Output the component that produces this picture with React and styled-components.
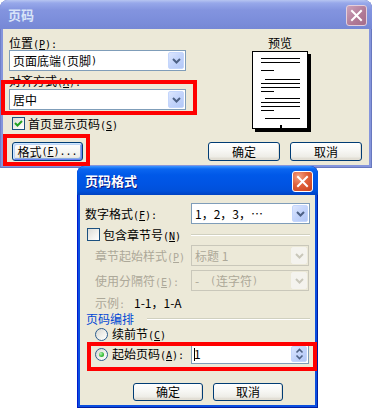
import React from "react";
import styled, { createGlobalStyle } from "styled-components";

const GlobalStyle = createGlobalStyle`
  html, body { margin: 0; padding: 0; background: #ffffff; }
  #root { width: 372px; height: 408px; }
`;

const FONT = `"Noto Sans CJK SC", "Noto Sans", sans-serif`;

const Desktop = styled.div`
  position: relative;
  width: 372px;
  height: 408px;
  overflow: hidden;
  background: #ffffff;
  font-family: ${FONT};
  font-size: 12px;
  line-height: 14px;
  color: #000;
`;

const Window = styled.div`
  position: absolute;
  left: ${(p) => p.$x}px;
  top: ${(p) => p.$y}px;
  width: ${(p) => p.$w}px;
  height: ${(p) => p.$h}px;
  box-sizing: border-box;
  display: flex;
  flex-direction: column;
  border-radius: 8px 8px 0 0;
  background: ${(p) => (p.$active ? "#0B4EDF" : "#8595DC")};
  box-shadow: ${(p) =>
    p.$active
      ? "inset 1px 0 #0019CF, inset -1px 0 #001DA0, inset 0 -1px #001DA0"
      : "inset 1px 0 #6F7FC9, inset -1px 0 #6878BE, inset 0 -1px #6878BE"};
`;

const TitleBar = styled.div`
  flex: none;
  height: 29px;
  box-sizing: border-box;
  display: flex;
  align-items: center;
  justify-content: space-between;
  padding: 1px 5px 0 8px;
  border-radius: 8px 8px 0 0;
  background: ${(p) =>
    p.$active
      ? "linear-gradient(180deg, #3D95FF 0px, #0A66F0 3px, #0058E8 9px, #0054E3 18px, #0050DA 25px, #0042C2 29px)"
      : "linear-gradient(180deg, #B7C5F1 0px, #97A8EA 3px, #8394DF 10px, #7C8EDB 20px, #7688D5 29px)"};
`;

const TitleText = styled.span`
  font-size: 13px;
  font-weight: bold;
  line-height: 16px;
  color: ${(p) => (p.$active ? "#ffffff" : "#D8E4F8")};
  text-shadow: ${(p) => (p.$active ? "1px 1px 0 #0A1883" : "none")};
`;

const CloseBtn = styled.span`
  flex: none;
  width: 21px;
  height: 21px;
  box-sizing: border-box;
  border-radius: 3px;
  border: 1px solid ${(p) => (p.$active ? "#ffffff" : "#E4CFDB")};
  background: ${(p) =>
    p.$active
      ? "radial-gradient(circle at 30% 25%, #F3A184 0%, #E0603A 45%, #C7401C 100%)"
      : "linear-gradient(135deg, #CCA2BA 0%, #B07996 60%, #A56D8B 100%)"};
  display: flex;
  align-items: center;
  justify-content: center;
`;

const OuterBody = styled.div`
  flex: 1;
  margin: 0 3px 3px;
  background: #ECE9D8;
  display: flex;
  padding: 7px 7px 4px 6px;
  box-sizing: border-box;
`;

const InnerBody = styled.div`
  flex: 1;
  margin: 0 3px 3px;
  background: #ECE9D8;
  display: flex;
  flex-direction: column;
  padding: 8px 5px 4px 5px;
  box-sizing: border-box;
`;

const LeftCol = styled.div`
  width: 177px;
  display: flex;
  flex-direction: column;
`;

const RightCol = styled.div`
  flex: 1;
  display: flex;
  flex-direction: column;
`;

const FieldLabel = styled.div`
  height: 14px;
  margin-top: ${(p) => p.$mt || 0}px;
  padding-left: ${(p) => p.$indent || 0}px;
  white-space: nowrap;
  color: ${(p) => (p.$disabled ? "#ACA899" : "#000")};
`;

const Lat = styled.span`
  font-family: "DejaVu Sans Mono", "Liberation Mono", monospace;
  font-size: 10px;
  line-height: 10px;
`;

const U = styled.u`
  text-underline-offset: 1px;
`;

const Mn = ({ k, colon, tail }) => (
  <Lat>
    (<U>{k}</U>){colon ? ":" : ""}
    {tail || ""}
  </Lat>
);

const SelectBox = styled.div`
  flex: none;
  width: ${(p) => p.$w}px;
  height: ${(p) => p.$h || 21}px;
  margin-top: ${(p) => p.$mt || 0}px;
  box-sizing: border-box;
  display: flex;
  align-items: stretch;
  border: 1px solid ${(p) => (p.$disabled ? "#C9C7BA" : "#7F9DB9")};
  background: ${(p) => (p.$disabled ? "#ECE9D8" : "#ffffff")};
  color: ${(p) => (p.$disabled ? "#ACA899" : "#000")};
`;

const SelectValue = styled.span`
  flex: 1;
  display: flex;
  align-items: center;
  padding-left: 3px;
  white-space: nowrap;
  overflow: hidden;
`;

const ArrowBtn = styled.span`
  flex: none;
  width: 16px;
  margin: 1px;
  box-sizing: border-box;
  border-radius: 2px;
  border: 1px solid ${(p) => (p.$disabled ? "#F4F3EE" : "#C4D6FC")};
  background: ${(p) =>
    p.$disabled
      ? "#F4F3EE"
      : "linear-gradient(135deg, #DCE6FE 0%, #C3D4FB 50%, #B3C8F7 100%)"};
  display: flex;
  align-items: center;
  justify-content: center;
`;

const Chevron = ({ color = "#4D6185" }) => (
  <svg width="9" height="6" viewBox="0 0 9 6">
    <path d="M1 1 L4.5 4.5 L8 1" fill="none" stroke={color} strokeWidth="2" />
  </svg>
);

const Select = ({ w, h, mt, disabled, children }) => (
  <SelectBox $w={w} $h={h} $mt={mt} $disabled={disabled}>
    <SelectValue>{children}</SelectValue>
    <ArrowBtn $disabled={disabled}>
      <Chevron color={disabled ? "#C9C7BA" : "#4D6185"} />
    </ArrowBtn>
  </SelectBox>
);

const CheckRow = styled.div`
  display: flex;
  align-items: center;
  gap: 3px;
  height: 13px;
  margin-top: ${(p) => p.$mt || 0}px;
  padding-left: ${(p) => p.$indent || 0}px;
  white-space: nowrap;
`;

const CheckBoxBox = styled.span`
  flex: none;
  width: 13px;
  height: 13px;
  box-sizing: border-box;
  border: 1px solid #1C5180;
  background: linear-gradient(135deg, #DCDCD7 0%, #F3F3EF 60%, #FFFFFF 100%);
  display: flex;
  align-items: center;
  justify-content: center;
`;

const CheckBox = ({ checked }) => (
  <CheckBoxBox>
    {checked && (
      <svg width="11" height="11" viewBox="0 0 11 11">
        <path d="M2 5 L4.5 7.5 L9 3" fill="none" stroke="#21A121" strokeWidth="2" />
      </svg>
    )}
  </CheckBoxBox>
);

const RadioDot = styled.span`
  flex: none;
  width: 13px;
  height: 13px;
  box-sizing: border-box;
  border-radius: 50%;
  border: 1px solid #2A5C8E;
  background: linear-gradient(135deg, #D8D8D2 0%, #F2F2EE 60%, #FFFFFF 100%);
  display: flex;
  align-items: center;
  justify-content: center;
  &::after {
    content: "";
    display: ${(p) => (p.$checked ? "block" : "none")};
    width: 5px;
    height: 5px;
    border-radius: 50%;
    background: radial-gradient(circle at 35% 35%, #B6F5B6 0%, #3CC03C 55%, #1E961E 100%);
  }
`;

const RadioRow = styled.div`
  display: flex;
  align-items: center;
  gap: 4px;
  height: ${(p) => p.$h || 14}px;
  margin-top: ${(p) => p.$mt || 0}px;
  padding-left: ${(p) => p.$indent || 0}px;
  white-space: nowrap;
`;

const PushButton = styled.div`
  flex: none;
  width: ${(p) => p.$w}px;
  height: ${(p) => p.$h}px;
  margin-top: ${(p) => (p.$auto ? "auto" : "0")};
  margin-left: ${(p) => p.$ml || 0}px;
  box-sizing: border-box;
  border: 1px solid #003C74;
  border-radius: 3px;
  background: linear-gradient(180deg, #FFFFFF 0%, #F7F7F4 45%, #EEEDE7 80%, #D8D2C6 100%);
  box-shadow: ${(p) =>
    p.$focus
      ? "inset 1px 1px 0 #CEE7FF, inset -1px -1px 0 #6982EE, inset 2px 2px 0 #BCD4F6, inset -2px -2px 0 #89ADE4"
      : "inset -1px -1px 0 #E3DFD4"};
  display: flex;
  align-items: center;
  justify-content: center;
  white-space: nowrap;
`;

const ButtonRow = styled.div`
  display: flex;
  gap: 10px;
  justify-content: ${(p) => (p.$start ? "flex-start" : "flex-end")};
  padding-left: ${(p) => p.$pl || 0}px;
  margin-top: auto;
`;

const Preview = styled.div`
  display: flex;
  flex-direction: column;
  align-items: flex-start;
  padding-left: 66px;
`;

const PreviewLabel = styled.div`
  width: 56px;
  height: 14px;
  text-align: center;
`;

const PageSvg = styled.svg`
  display: block;
  margin-top: 1px;
`;

const previewLines = [
  [7, 9, 48], [11, 9, 48], [19, 9, 22],
  [28, 13, 48], [32, 9, 48], [36, 9, 48], [40, 9, 22],
  [47, 13, 48], [51, 9, 48], [55, 9, 48], [59, 9, 22],
  [67, 13, 48],
];

const PagePreview = () => (
  <PageSvg width="60" height="81" viewBox="0 0 60 81">
    <rect x="3" y="3" width="56" height="78" fill="#000" />
    <rect x="0.5" y="0.5" width="55" height="77" fill="#fff" stroke="#000" />
    {previewLines.map(([y, x1, x2], i) => (
      <rect key={i} x={x1} y={y} width={x2 - x1} height="1" fill="#000" />
    ))}
    <rect x="28" y="74" width="2" height="3" fill="#000" />
  </PageSvg>
);

const FormRow = styled.div`
  display: grid;
  grid-template-columns: 106px 119px;
  align-items: center;
  height: ${(p) => p.$h}px;
  margin-top: ${(p) => p.$mt || 0}px;
`;

const Etch = styled.div`
  height: 0;
  border-top: 1px solid #D0D0BF;
  border-bottom: 1px solid #FFFFFF;
  flex: 1;
  margin-left: ${(p) => p.$ml || 0}px;
`;

const ExampleRow = styled.div`
  display: flex;
  align-items: center;
  height: 14px;
  margin-top: 5px;
  padding-left: 10px;
`;

const ExampleLabel = styled.span`
  width: 39px;
  color: #ACA899;
`;

const GroupHeader = styled.div`
  display: flex;
  align-items: center;
  height: 14px;
  margin-top: 2px;
  padding-left: 1px;
`;

const GroupTitle = styled.span`
  color: #0046D5;
`;

const SpinBox = styled.div`
  width: ${(p) => p.$w}px;
  height: 20px;
  box-sizing: border-box;
  display: flex;
  border: 1px solid #7F9DB9;
  background: #ffffff;
`;

const SpinValue = styled.span`
  flex: 1;
  display: flex;
  align-items: center;
  padding-left: 2px;
`;

const Caret = styled.span`
  width: 1px;
  height: 13px;
  background: #000;
  margin-right: -1px;
`;

const SpinArrows = () => (
  <svg width="9" height="12" viewBox="0 0 9 12">
    <path d="M1.5 4.5 L4.5 1.5 L7.5 4.5" fill="none" stroke="#4D6185" strokeWidth="1.6" />
    <path d="M1.5 7.5 L4.5 10.5 L7.5 7.5" fill="none" stroke="#4D6185" strokeWidth="1.6" />
  </svg>
);

const CloseIcon = () => (
  <svg width="13" height="13" viewBox="0 0 13 13">
    <path d="M2 2 L11 11 M11 2 L2 11" stroke="#fff" strokeWidth="2" strokeLinecap="square" />
  </svg>
);

const Annotation = styled.div`
  position: absolute;
  left: ${(p) => p.$x}px;
  top: ${(p) => p.$y}px;
  width: ${(p) => p.$w}px;
  height: ${(p) => p.$h}px;
  box-sizing: border-box;
  border: 4px solid #FF0000;
  pointer-events: none;
`;

export default function App() {
  return (
    <>
      <GlobalStyle />
      <Desktop>
        <Window $x={0} $y={0} $w={372} $h={168}>
          <TitleBar>
            <TitleText>页码</TitleText>
            <CloseBtn>
              <CloseIcon />
            </CloseBtn>
          </TitleBar>
          <OuterBody>
            <LeftCol>
              <FieldLabel>
                位置<Mn k="P" colon />
              </FieldLabel>
              <Select w={177}>
                页面底端<Lat>(</Lat>页脚<Lat>)</Lat>
              </Select>
              <FieldLabel $mt={3}>
                对齐方式<Mn k="A" colon />
              </FieldLabel>
              <Select w={177} mt={1}>
                居中
              </Select>
              <CheckRow $mt={7} $indent={3}>
                <CheckBox checked />
                <span>
                  首页显示页码<Mn k="S" />
                </span>
              </CheckRow>
              <PushButton $w={71} $h={19} $auto $ml={3} $focus>
                格式<Mn k="F" tail="..." />
              </PushButton>
            </LeftCol>
            <RightCol>
              <Preview>
                <PreviewLabel>预览</PreviewLabel>
                <PagePreview />
              </Preview>
              <ButtonRow>
                <PushButton $w={72} $h={19}>确定</PushButton>
                <PushButton $w={72} $h={19}>取消</PushButton>
              </ButtonRow>
            </RightCol>
          </OuterBody>
        </Window>

        <Window $x={77} $y={166} $w={241} $h={242} $active>
          <TitleBar $active>
            <TitleText $active>页码格式</TitleText>
            <CloseBtn $active>
              <CloseIcon />
            </CloseBtn>
          </TitleBar>
          <InnerBody>
            <FormRow $h={21}>
              <FieldLabel>
                数字格式<Mn k="F" colon />
              </FieldLabel>
              <Select w={119}>1，2，3，…</Select>
            </FormRow>
            <FormRow $h={15} $mt={3}>
              <CheckRow $indent={2}>
                <CheckBox />
                <span>
                  包含章节号<Mn k="N" />
                </span>
              </CheckRow>
              <Etch />
            </FormRow>
            <FormRow $h={21} $mt={3}>
              <FieldLabel $indent={10} $disabled>
                章节起始样式<Mn k="P" />
              </FieldLabel>
              <Select w={118} disabled>
                标题 1
              </Select>
            </FormRow>
            <FormRow $h={21} $mt={4}>
              <FieldLabel $indent={10} $disabled>
                使用分隔符<Mn k="E" colon />
              </FieldLabel>
              <Select w={118} disabled>
                -&nbsp;&nbsp;&nbsp;&nbsp;<Lat>(</Lat>连字符<Lat>)</Lat>
              </Select>
            </FormRow>
            <ExampleRow>
              <ExampleLabel>
                示例<Lat>:</Lat>
              </ExampleLabel>
              <span>1-1，1-A</span>
            </ExampleRow>
            <GroupHeader>
              <GroupTitle>页码编排</GroupTitle>
              <Etch $ml={13} />
            </GroupHeader>
            <RadioRow $indent={10} $mt={1}>
              <RadioDot />
              <span>
                续前节<Mn k="C" />
              </span>
            </RadioRow>
            <FormRow $h={20} $mt={3}>
              <RadioRow $indent={10} $h={20}>
                <RadioDot $checked />
                <span>
                  起始页码<Mn k="A" colon />
                </span>
              </RadioRow>
              <SpinBox $w={118}>
                <SpinValue>
                  <Caret />1
                </SpinValue>
                <ArrowBtn>
                  <SpinArrows />
                </ArrowBtn>
              </SpinBox>
            </FormRow>
            <ButtonRow $start $pl={48}>
              <PushButton $w={70} $h={18}>确定</PushButton>
              <PushButton $w={70} $h={18}>取消</PushButton>
            </ButtonRow>
          </InnerBody>
        </Window>

        <Annotation $x={1} $y={80} $w={196} $h={35} />
        <Annotation $x={3} $y={134} $w={87} $h={32} />
        <Annotation $x={87} $y={342} $w={230} $h={29} />
      </Desktop>
    </>
  );
}
